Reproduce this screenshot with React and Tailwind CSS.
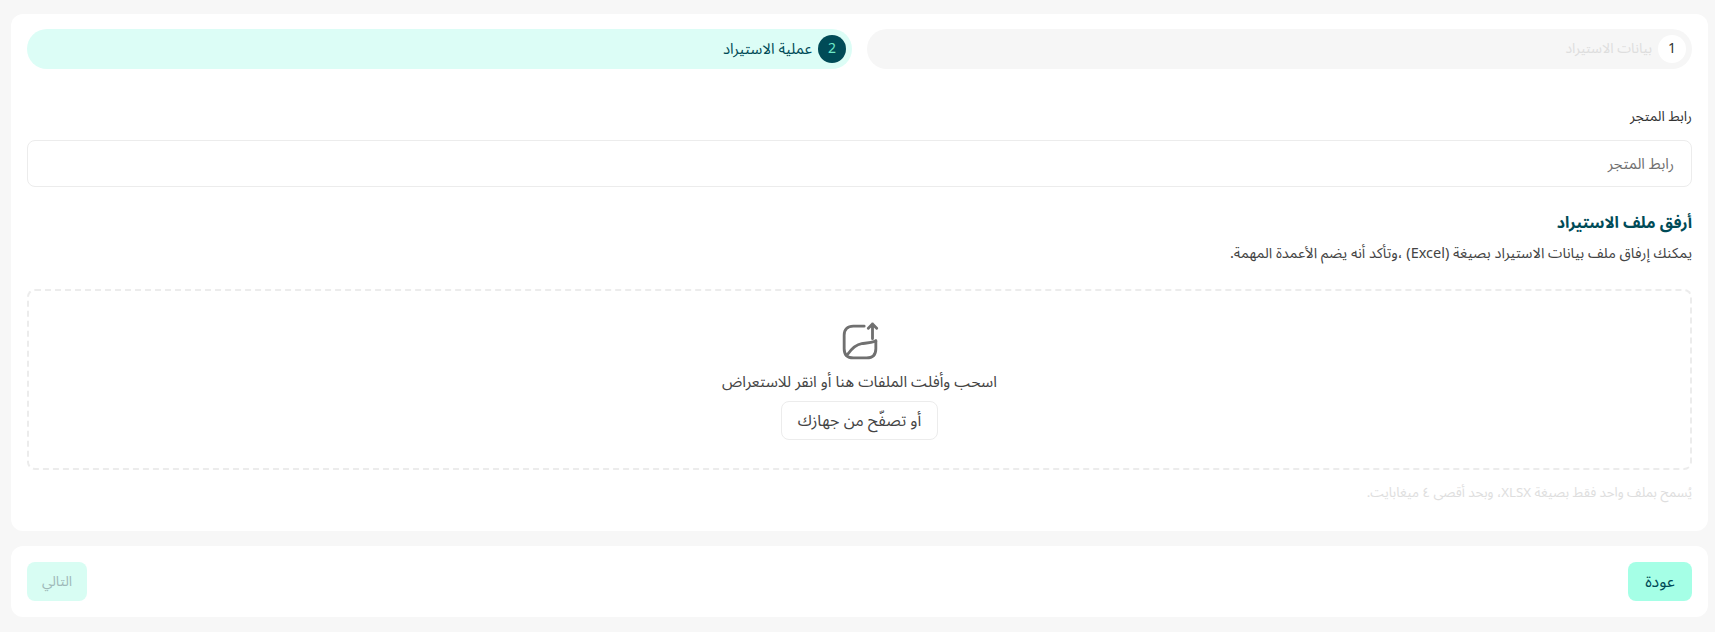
import React from 'react';

function Step({ number, title, active }) {
  return (
    <div className={`flex-1 h-10 rounded-full flex items-center gap-[6px] pr-[6px] ${active ? 'bg-[#dcfdf6]' : 'bg-[#f6f6f6]'}`}>
      <span className={`w-7 h-7 rounded-full flex items-center justify-center text-sm ${active ? 'bg-[#004b57] text-[#6fe8c8]' : 'bg-white text-[#333333]'}`}>
        {number}
      </span>
      <span className={active ? 'text-[15px] text-[#004b57]' : 'text-sm text-[#dedede]'}>{title}</span>
    </div>
  );
}

function UploadIcon() {
  return (
    <svg width="40" height="40" viewBox="0 0 24 24" fill="none" stroke="#707070" strokeWidth="1.7" strokeLinecap="round" strokeLinejoin="round">
      <path d="M14.5 2.5H8C4.5 2.5 2.5 4.5 2.5 8V16C2.5 19.5 4.5 21.5 8 21.5H16C19.5 21.5 21.5 19.5 21.5 16V11.2" />
      <path d="M19.5 10V1.2M17 3.7L19.5 1.2L22 3.7" />
      <path d="M4.5 19.5C7 16 9.5 13.5 13 13C16 12.6 18 12.6 21.5 11.5" />
    </svg>
  );
}

export default function App() {
  return (
    <div dir="rtl" className="min-h-[632px] bg-[#f7f7f7] pt-[14px] pr-[7px] pl-[11px] font-['Noto_Sans_Arabic','DejaVu_Sans',sans-serif]">
      <div className="bg-white rounded-xl px-4 pt-[15px] h-[517px]">
        <div className="flex gap-[15px]">
          <Step number="1" title="بيانات الاستيراد" />
          <Step number="2" title="عملية الاستيراد" active />
        </div>

        <label className="block mt-[38px] text-sm leading-5 text-[#333333]">رابط المتجر</label>
        <input
          placeholder="رابط المتجر"
          className="mt-[13px] block w-full h-[47px] rounded-lg border border-[#ececec] px-[17px] text-[15px] outline-none placeholder:text-[#707070]"
        />

        <h2 className="mt-[25px] text-base font-bold leading-[22px] text-[#004b57]">أرفق ملف الاستيراد</h2>
        <p className="mt-[10px] text-[14.5px] leading-5 text-[#444444]">
          يمكنك إرفاق ملف بيانات الاستيراد بصيغة (Excel) ،وتأكد أنه يضم الأعمدة المهمة.
        </p>

        <div className="mt-[25px] h-[181px] rounded-lg border-2 border-dashed border-[#ececec] flex flex-col items-center pt-[31px]">
          <UploadIcon />
          <p className="mt-[10px] text-[15.5px] leading-5 text-[#444444]">اسحب وأفلت الملفات هنا أو انقر للاستعراض</p>
          <button className="mt-[9px] w-[157px] h-[39px] rounded-lg border border-[#ececec] bg-white text-base text-[#444444]">
            أو تصفّح من جهازك
          </button>
        </div>

        <p className="mt-[13px] text-[13.3px] leading-5 text-[#dedede]">يُسمح بملف واحد فقط بصيغة XLSX، وبحد أقصى ٤ ميغابايت.</p>
      </div>

      <div className="mt-[15px] bg-white rounded-xl h-[71px] px-4 flex items-center justify-between">
        <button className="w-16 h-[39px] rounded-lg bg-[#a5ffe6] text-base text-[#004b57]">عودة</button>
        <button disabled className="w-[60px] h-[39px] rounded-lg bg-[#d8fdf3] text-sm text-[#9fb9b9]">التالي</button>
      </div>
    </div>
  );
}
